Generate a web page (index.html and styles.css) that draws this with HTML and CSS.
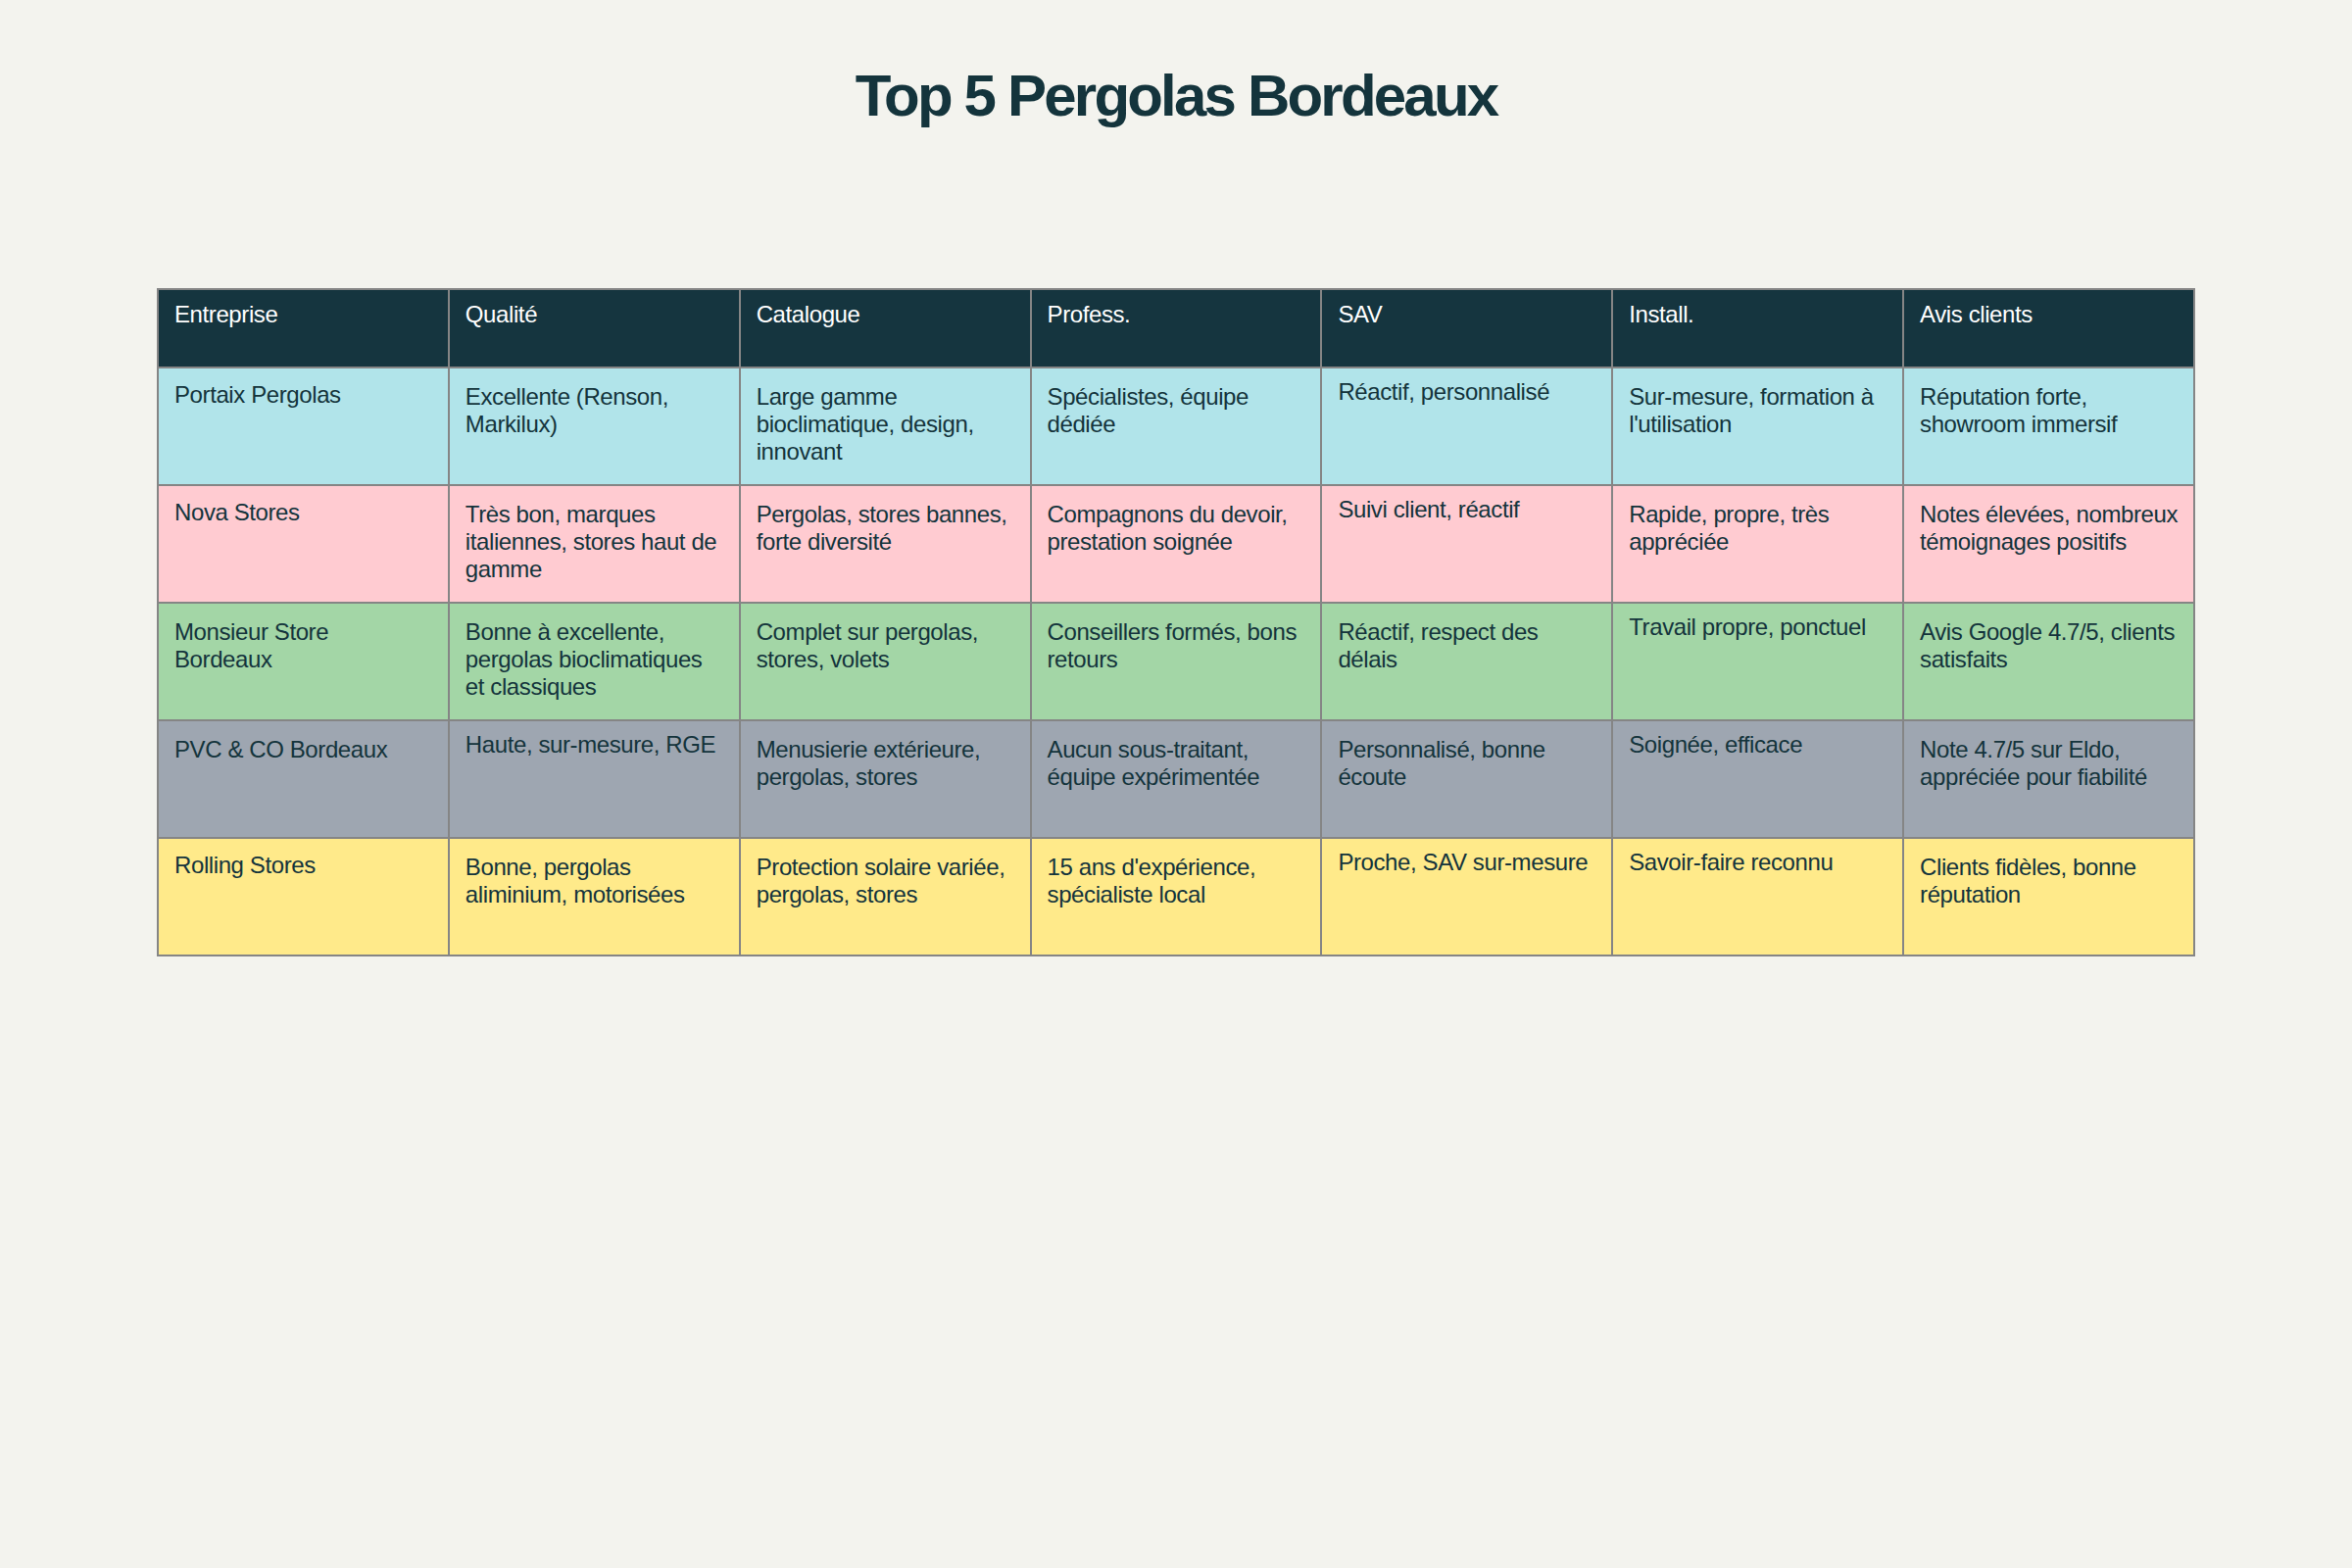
FILE: index.html
```html
<!DOCTYPE html>
<html lang="fr">
<head>
    <meta charset="UTF-8">
    <title>Top 5 Pergolas Bordeaux</title>
    <link rel="stylesheet" href="styles.css">
</head>
<body>
    <h1 class="page-title">Top 5 Pergolas Bordeaux</h1>

    <table class="compare-table">
        <thead>
            <tr>
                <th>Entreprise</th>
                <th>Qualité</th>
                <th>Catalogue</th>
                <th>Profess.</th>
                <th>SAV</th>
                <th>Install.</th>
                <th>Avis clients</th>
            </tr>
        </thead>
        <tbody>
            <tr class="row-cyan">
                <td class="lead">Portaix Pergolas</td>
                <td>Excellente (Renson,<br>Markilux)</td>
                <td>Large gamme<br>bioclimatique, design,<br>innovant</td>
                <td>Spécialistes, équipe<br>dédiée</td>
                <td class="short">Réactif, personnalisé</td>
                <td>Sur-mesure, formation à<br>l'utilisation</td>
                <td>Réputation forte,<br>showroom immersif</td>
            </tr>
            <tr class="row-pink">
                <td class="lead">Nova Stores</td>
                <td>Très bon, marques<br>italiennes, stores haut de<br>gamme</td>
                <td>Pergolas, stores bannes,<br>forte diversité</td>
                <td>Compagnons du devoir,<br>prestation soignée</td>
                <td class="short">Suivi client, réactif</td>
                <td>Rapide, propre, très<br>appréciée</td>
                <td>Notes élevées, nombreux<br>témoignages positifs</td>
            </tr>
            <tr class="row-green">
                <td>Monsieur Store<br>Bordeaux</td>
                <td>Bonne à excellente,<br>pergolas bioclimatiques<br>et classiques</td>
                <td>Complet sur pergolas,<br>stores, volets</td>
                <td>Conseillers formés, bons<br>retours</td>
                <td>Réactif, respect des<br>délais</td>
                <td class="short">Travail propre, ponctuel</td>
                <td>Avis Google 4.7/5, clients<br>satisfaits</td>
            </tr>
            <tr class="row-grey">
                <td>PVC &amp; CO Bordeaux</td>
                <td class="short">Haute, sur-mesure, RGE</td>
                <td>Menusierie extérieure,<br>pergolas, stores</td>
                <td>Aucun sous-traitant,<br>équipe expérimentée</td>
                <td>Personnalisé, bonne<br>écoute</td>
                <td class="short">Soignée, efficace</td>
                <td>Note 4.7/5 sur Eldo,<br>appréciée pour fiabilité</td>
            </tr>
            <tr class="row-yellow">
                <td class="lead">Rolling Stores</td>
                <td>Bonne, pergolas<br>aliminium, motorisées</td>
                <td>Protection solaire variée,<br>pergolas, stores</td>
                <td>15 ans d'expérience,<br>spécialiste local</td>
                <td class="short">Proche, SAV sur-mesure</td>
                <td class="short">Savoir-faire reconnu</td>
                <td>Clients fidèles, bonne<br>réputation</td>
            </tr>
        </tbody>
    </table>
</body>
</html>
```

FILE: styles.css
```css
body {
    margin: 0;
    min-height: 100vh;
    background-color: #f3f3ee;
    font-family: "Liberation Sans", Arial, sans-serif;
    color: #14343c;
}

.page-title {
    margin: 62px 0 0;
    font-size: 60px;
    line-height: 72px;
    font-weight: bold;
    letter-spacing: -2.8px;
    text-align: center;
    color: #14343c;
}

/* Comparison table */
.compare-table {
    width: 2080px;
    margin: 160px auto 0;
    border-collapse: collapse;
    table-layout: fixed;
    font-size: 24px;
    line-height: 28px;
    letter-spacing: -0.4px;
}

.compare-table th,
.compare-table td {
    border: 2px solid #858585;
    text-align: left;
    vertical-align: top;
    font-weight: normal;
    white-space: nowrap;
    padding: 15px 16px 0;
}

.compare-table thead tr {
    height: 80px;
}

.compare-table th {
    background: #15353f;
    color: #ffffff;
    padding-top: 11px;
}

.compare-table tbody tr {
    height: 120px;
}

.compare-table td.short {
    padding-top: 10px;
}

.compare-table td.lead {
    padding-top: 13px;
}

.row-cyan {
    background: #b1e4ea;
}

.row-pink {
    background: #ffcbd1;
}

.row-green {
    background: #a3d6a6;
}

.row-grey {
    background: #9ea6b1;
}

.row-yellow {
    background: #ffea8a;
}
```
